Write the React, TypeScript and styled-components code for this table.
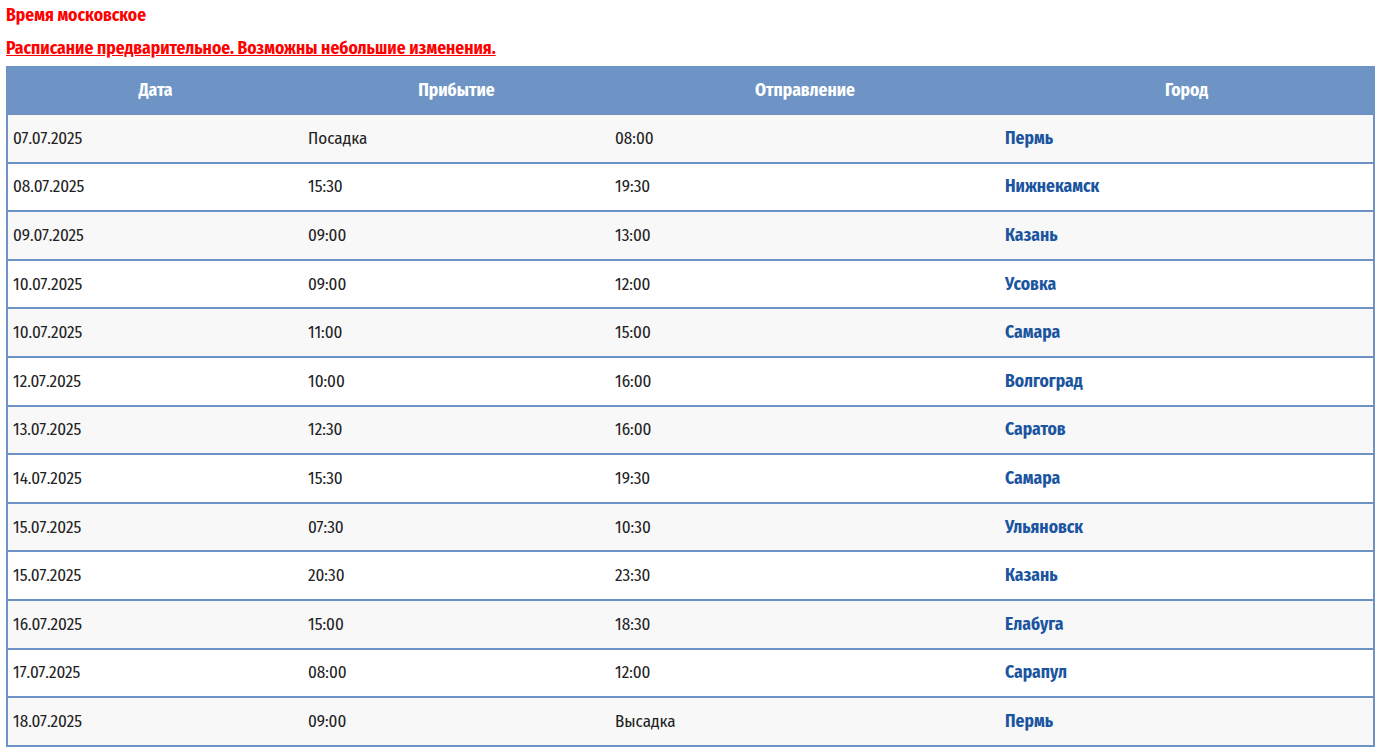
import styled, { createGlobalStyle } from "styled-components";

const GlobalStyle = createGlobalStyle`
  html, body {
    margin: 0;
    padding: 0;
    background: #ffffff;
  }
  body {
    font-family: "Fira Sans Condensed", "Roboto Condensed", "DejaVu Sans Condensed", sans-serif;
    color: #222222;
  }
`;

const Page = styled.div`
  padding: 4px 6px 0 6px;
`;

const Notice = styled.p<{ $underline?: boolean }>`
  margin: 0 0 ${(p) => (p.$underline ? "5px" : "9px")} 0;
  color: #ff0000;
  font-weight: 700;
  font-size: 17.5px;
  line-height: 24px;
  text-decoration: ${(p) => (p.$underline ? "underline" : "none")};
`;

const Table = styled.table`
  width: 100%;
  border-collapse: collapse;
  border: 2px solid #6c93c3;
  font-size: 17px;
`;

const HeadCell = styled.th`
  background: #6d94c4;
  color: #ffffff;
  font-weight: 700;
  font-size: 17.5px;
  height: 45px;
  padding: 0 6px;
  text-align: center;
`;

const Row = styled.tr<{ $odd: boolean }>`
  background: ${(p) => (p.$odd ? "#f8f8f8" : "#ffffff")};
  border-top: 2px solid #6c93c3;
`;

const Cell = styled.td`
  height: 46.6px;
  padding: 0 5px;
  text-align: left;
  vertical-align: middle;
`;

const CityCell = styled(Cell)`
  color: #1b55a0;
  font-weight: 700;
  font-size: 17.5px;
`;

interface Stop {
  date: string;
  arrival: string;
  departure: string;
  city: string;
}

const stops: Stop[] = [
  { date: "07.07.2025", arrival: "Посадка", departure: "08:00", city: "Пермь" },
  { date: "08.07.2025", arrival: "15:30", departure: "19:30", city: "Нижнекамск" },
  { date: "09.07.2025", arrival: "09:00", departure: "13:00", city: "Казань" },
  { date: "10.07.2025", arrival: "09:00", departure: "12:00", city: "Усовка" },
  { date: "10.07.2025", arrival: "11:00", departure: "15:00", city: "Самара" },
  { date: "12.07.2025", arrival: "10:00", departure: "16:00", city: "Волгоград" },
  { date: "13.07.2025", arrival: "12:30", departure: "16:00", city: "Саратов" },
  { date: "14.07.2025", arrival: "15:30", departure: "19:30", city: "Самара" },
  { date: "15.07.2025", arrival: "07:30", departure: "10:30", city: "Ульяновск" },
  { date: "15.07.2025", arrival: "20:30", departure: "23:30", city: "Казань" },
  { date: "16.07.2025", arrival: "15:00", departure: "18:30", city: "Елабуга" },
  { date: "17.07.2025", arrival: "08:00", departure: "12:00", city: "Сарапул" },
  { date: "18.07.2025", arrival: "09:00", departure: "Высадка", city: "Пермь" },
];

export default function App() {
  return (
    <>
      <GlobalStyle />
      <Page>
        <Notice>Время московское</Notice>
        <Notice $underline>Расписание предварительное. Возможны небольшие изменения.</Notice>
        <Table>
          <colgroup>
            <col style={{ width: 296 }} />
            <col style={{ width: 307 }} />
            <col style={{ width: 390 }} />
            <col />
          </colgroup>
          <thead>
            <tr>
              <HeadCell>Дата</HeadCell>
              <HeadCell>Прибытие</HeadCell>
              <HeadCell>Отправление</HeadCell>
              <HeadCell>Город</HeadCell>
            </tr>
          </thead>
          <tbody>
            {stops.map((s, i) => (
              <Row key={i} $odd={i % 2 === 0}>
                <Cell>{s.date}</Cell>
                <Cell>{s.arrival}</Cell>
                <Cell>{s.departure}</Cell>
                <CityCell>{s.city}</CityCell>
              </Row>
            ))}
          </tbody>
        </Table>
      </Page>
    </>
  );
}
